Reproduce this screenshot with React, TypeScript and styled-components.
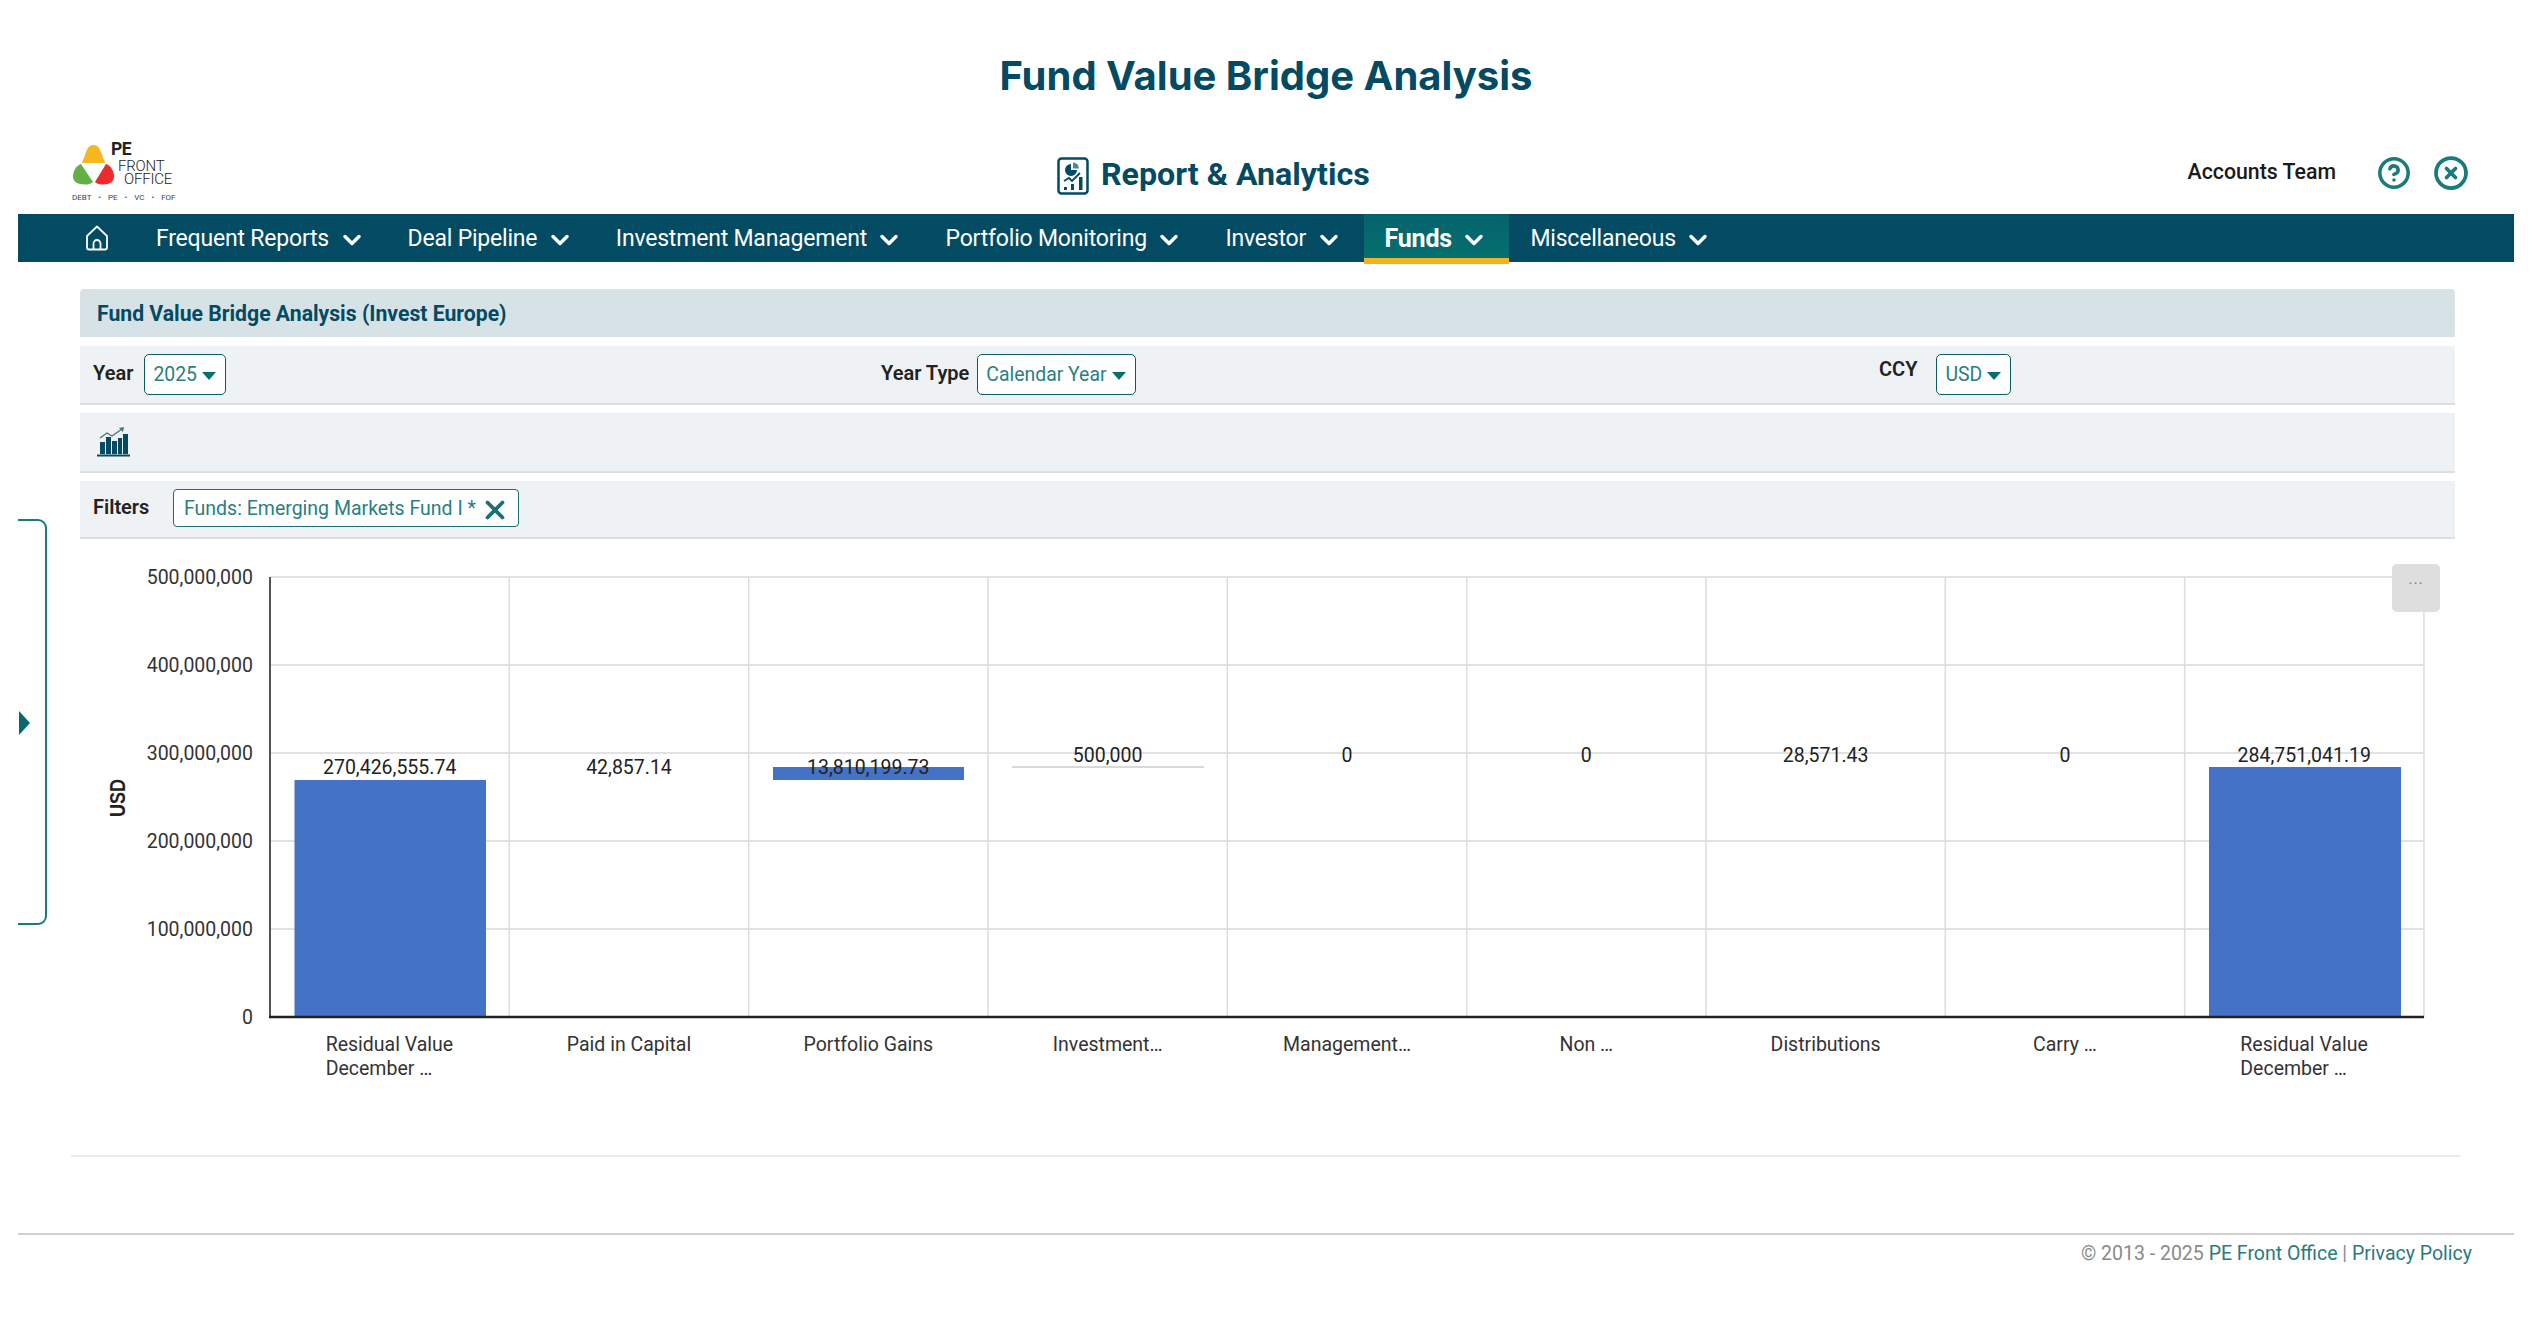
import styled, { createGlobalStyle } from "styled-components";
import { ChevronDown, CircleHelp, CircleX, X } from "lucide-react";

const GlobalStyle = createGlobalStyle`
  html, body {
    margin: 0;
    padding: 0;
    background: #fff;
    font-family: Roboto, "Liberation Sans", sans-serif;
  }
`;

const Page = styled.div`
  position: relative;
  width: 2530px;
  height: 1330px;
  overflow: hidden;
  padding: 0 16px 0 18px;
  box-sizing: border-box;
`;

const PageTitle = styled.h1`
  height: 140px;
  margin: 0;
  padding-top: 52px;
  box-sizing: border-box;
  text-align: center;
  font-family: Inter, Roboto, sans-serif;
  font-size: 40px;
  line-height: 48px;
  font-weight: 700;
  color: #034a63;
`;

const Header = styled.header`
  height: 74px;
  display: grid;
  grid-template-columns: 1039px auto 1fr;
  align-items: start;
`;

const LogoBox = styled.div`
  padding-left: 52px;
`;

const AppName = styled.div`
  display: flex;
  align-items: flex-start;
  gap: 12px;
  padding-top: 15px;
  font-size: 32.2px;
  line-height: 38px;
  font-weight: 700;
  color: #034a63;
`;

const ReportSvg = styled.svg`
  margin-top: 2px;
`;

const UserBox = styled.div`
  display: flex;
  justify-content: flex-end;
  align-items: center;
  padding: 15px 45px 0 0;
  color: #1a7a7c;
`;

const UserName = styled.span`
  margin: 0 41px 3px 0;
  font-size: 21.3px;
  font-weight: 500;
  color: #1a1a1a;
`;

const HelpIcon = styled(CircleHelp)`
  width: 34px;
  height: 34px;
`;

const CloseIcon = styled(CircleX)`
  width: 36px;
  height: 36px;
  margin-left: 22px;
`;

const Nav = styled.nav`
  height: 48px;
  display: flex;
  align-items: flex-start;
  background: #034a63;
  padding-left: 67px;
`;

const HomeLink = styled.div`
  height: 48px;
  display: flex;
  align-items: center;
  margin-right: 26px;
`;

const NavItem = styled.div<{ $active?: boolean }>`
  display: flex;
  align-items: center;
  gap: 8.5px;
  box-sizing: border-box;
  height: ${(p) => (p.$active ? "50px" : "48px")};
  padding: ${(p) => (p.$active ? "4px 21px 0" : "0 21px")};
  font-size: ${(p) => (p.$active ? "25px" : "23px")};
  letter-spacing: -0.2px;
  font-weight: ${(p) => (p.$active ? 700 : 400)};
  color: #fff;
  background: ${(p) => (p.$active ? "linear-gradient(#04626c, #06706f)" : "transparent")};
  border-bottom: ${(p) => (p.$active ? "6px solid #f5b120" : "none")};
  position: relative;
`;

const NavChevron = styled(ChevronDown)`
  width: 28px;
  height: 28px;
  margin-top: 3px;
`;

const Content = styled.main`
  padding: 27px 59px 0 62px;
`;

const PanelTitle = styled.div`
  height: 48px;
  display: flex;
  align-items: center;
  padding-left: 17px;
  margin-bottom: 9px;
  background: #d7e2e6;
  border-radius: 4px 4px 0 0;
  font-size: 21.2px;
  font-weight: 700;
  color: #034a63;
`;

const Row = styled.div<{ $height: number; $last?: boolean; $inset?: number }>`
  height: ${(p) => p.$height}px;
  display: flex;
  align-items: center;
  box-sizing: border-box;
  padding-left: ${(p) => p.$inset ?? 13}px;
  margin-bottom: ${(p) => (p.$last ? 0 : 8)}px;
  background: #eff2f5;
  border-bottom: 2px solid #dcdfe1;
`;

const FilterGroup = styled.div<{ $width?: number; $gap: number }>`
  display: flex;
  align-items: center;
  gap: ${(p) => p.$gap}px;
  width: ${(p) => (p.$width ? `${p.$width}px` : "auto")};
`;

const Label = styled.span<{ $raised?: boolean }>`
  font-size: 20px;
  font-weight: 600;
  color: #222;
  margin-bottom: ${(p) => (p.$raised ? 12 : 4)}px;
`;

const Dropdown = styled.div`
  height: 41px;
  display: flex;
  align-items: center;
  gap: 5px;
  box-sizing: border-box;
  padding: 0 9px 0 8px;
  background: #fff;
  border: 1.5px solid #0d5c63;
  border-radius: 5px;
  font-size: 19.4px;
  color: #2a8080;
`;

const Caret = styled.span`
  width: 0;
  height: 0;
  margin-top: 3px;
  border-left: 7.5px solid transparent;
  border-right: 7.5px solid transparent;
  border-top: 8px solid #06706f;
`;

const Chip = styled.div`
  height: 38px;
  display: flex;
  align-items: center;
  gap: 4px;
  box-sizing: border-box;
  padding: 0 8px 0 10px;
  margin-bottom: 2px;
  background: #fff;
  border: 1.5px solid #1a7072;
  border-radius: 4px;
  font-size: 19.5px;
  color: #2a8080;
`;

const ChipClose = styled(X)`
  width: 30px;
  height: 30px;
  margin-top: 3px;
  color: #1a7072;
`;

const ChartArea = styled.div`
  position: relative;
  height: 600px;
`;

const ChartSvg = styled.svg`
  display: block;
  font-family: Roboto, "Liberation Sans", sans-serif;
`;

const MoreButton = styled.div`
  position: absolute;
  top: 25px;
  right: 15px;
  width: 48px;
  height: 48px;
  display: flex;
  justify-content: center;
  background: #dedede;
  border-radius: 5px;
  font-size: 16px;
  line-height: 30px;
  letter-spacing: 1px;
  color: #5f8fc0;
`;

const Divider = styled.hr`
  height: 0;
  margin: 16px -5px 0 -9px;
  border: 0;
  border-top: 2px solid #ebebeb;
`;

const Footer = styled.footer`
  margin-top: 76px;
  border-top: 2px solid #cfcfcf;
  padding: 6px 42px 0 0;
  text-align: right;
  font-size: 19.5px;
  line-height: 26px;
  color: #8a8a8a;
`;

const FooterLink = styled.a`
  color: #2a7a80;
`;

const SideTab = styled.div`
  position: absolute;
  left: 18px;
  top: 519px;
  width: 29px;
  height: 406px;
  border: 2px solid #1a7a7c;
  border-left: 0;
  border-radius: 0 9px 9px 0;
  box-sizing: border-box;
`;

const SideArrow = styled.span`
  position: absolute;
  left: 1px;
  top: 190px;
  width: 0;
  height: 0;
  border-top: 12.5px solid transparent;
  border-bottom: 12.5px solid transparent;
  border-left: 11px solid #05686f;
`;

const navLinks = [
  "Frequent Reports",
  "Deal Pipeline",
  "Investment Management",
  "Portfolio Monitoring",
  "Investor",
  "Funds",
  "Miscellaneous",
];

const yTicks = [
  { label: "500,000,000", y: 577 },
  { label: "400,000,000", y: 665 },
  { label: "300,000,000", y: 753 },
  { label: "200,000,000", y: 841 },
  { label: "100,000,000", y: 929 },
  { label: "0", y: 1017 },
];

const COL = 239.33;
const LEFT = 270;

const columns = [
  { value: "270,426,555.74", valueY: 767, cat: ["Residual Value", "December …"] },
  { value: "42,857.14", valueY: 767, cat: ["Paid in Capital"] },
  { value: "13,810,199.73", valueY: 767, cat: ["Portfolio Gains"] },
  { value: "500,000", valueY: 755, cat: ["Investment…"] },
  { value: "0", valueY: 755, cat: ["Management…"] },
  { value: "0", valueY: 755, cat: ["Non …"] },
  { value: "28,571.43", valueY: 755, cat: ["Distributions"] },
  { value: "0", valueY: 755, cat: ["Carry …"] },
  { value: "284,751,041.19", valueY: 755, cat: ["Residual Value", "December …"] },
];

const bars = [
  { x: 294.5, y: 780, w: 191.5, h: 237 },
  { x: 773, y: 767, w: 191, h: 13 },
  { x: 2209, y: 767, w: 192, h: 250 },
];

function Logo() {
  return (
    <svg width="106" height="62" viewBox="70 140 106 62">
      <path d="M93.500 145c4 0 6 3 7.500 7l4 11H82l4-11c1.500-4 3.500-7 7.500-7z" fill="#f5b81f" />
      <path d="M81 164l12 18c-2 2-5 2.500-8 2.500-8 0-12-3-12-8 0-5 3-11 8-12.500z" fill="#63b146" />
      <path d="M106 164c5 1.500 8 7.500 8 12.500 0 5-4 8-11 8-3 0-6-.5-8-2.500z" fill="#ee2a2e" />
      <text x="111" y="155" fontFamily="Roboto, sans-serif" fontSize="17.500" fontWeight="700" fill="#222" letterSpacing="-0.5">
        PE
      </text>
      <text x="118" y="171" fontFamily="Roboto, sans-serif" fontSize="15" fontWeight="300" fill="#222" letterSpacing="-0.2">
        FRONT
      </text>
      <text x="124" y="184" fontFamily="Roboto, sans-serif" fontSize="15" fontWeight="300" fill="#222" letterSpacing="-0.2">
        OFFICE
      </text>
      <text x="72" y="200" fontFamily="Roboto, sans-serif" fontSize="8" fill="#444" wordSpacing="5">
        DEBT • PE • VC • FOF
      </text>
    </svg>
  );
}

function HomeIcon() {
  return (
    <svg width="24" height="26" viewBox="0 0 24 26" fill="none" stroke="#fff" strokeWidth="1.800" strokeLinejoin="round">
      <path d="M12 1.500L2 11v11.500a2 2 0 0 0 2 2h16a2 2 0 0 0 2-2V11z" />
      <path d="M8.500 24.500v-6a3.500 3.500 0 0 1 7 0v6" />
    </svg>
  );
}

function ReportIcon() {
  return (
    <ReportSvg width="32" height="38" viewBox="0 0 32 38" fill="none" stroke="#034a63">
      <rect x="1.500" y="1.500" width="29" height="35" rx="3" strokeWidth="2.500" />
      <path d="M14 7a6 6 0 1 0 6 6h-6z" fill="#034a63" stroke="none" />
      <path d="M16 5.500a6 6 0 0 1 6 6h-6z" fill="#4d8a99" stroke="none" />
      <path d="M7 24l5-3 3 3 8-8" strokeWidth="1.800" />
      <rect x="7" y="30" width="3" height="3" fill="#034a63" stroke="none" />
      <rect x="14" y="27" width="3" height="6" fill="#034a63" stroke="none" />
      <rect x="22" y="20" width="3.500" height="13" fill="#034a63" stroke="none" />
    </ReportSvg>
  );
}

function BarsIcon() {
  return (
    <svg width="33" height="30" viewBox="0 0 33 30" fill="#034a63">
      <path d="M3 11l7-5 5 3 10-7" fill="none" stroke="#4d7480" strokeWidth="1.400" />
      <path d="M22 1l5-1-1 5z" fill="#4d7480" />
      <rect x="3" y="15" width="5" height="12" />
      <rect x="9" y="10" width="5" height="17" />
      <rect x="15" y="14" width="5" height="13" />
      <rect x="21" y="11" width="4" height="16" />
      <rect x="26" y="7" width="5" height="20" />
      <rect x="0" y="27.500" width="33" height="2" />
    </svg>
  );
}

export default function App() {
  return (
    <>
      <GlobalStyle />
      <Page>
        <PageTitle>Fund Value Bridge Analysis</PageTitle>
        <Header>
          <LogoBox>
            <Logo />
          </LogoBox>
          <AppName>
            <ReportIcon />
            <span>Report &amp; Analytics</span>
          </AppName>
          <UserBox>
            <UserName>Accounts Team</UserName>
            <HelpIcon strokeWidth={2.5} />
            <CloseIcon strokeWidth={2.5} />
          </UserBox>
        </Header>
        <Nav>
          <HomeLink>
            <HomeIcon />
          </HomeLink>
          {navLinks.map((name) => (
            <NavItem key={name} $active={name === "Funds"}>
              {name}
              <NavChevron strokeWidth={3} />
            </NavItem>
          ))}
        </Nav>
        <Content>
          <PanelTitle>Fund Value Bridge Analysis (Invest Europe)</PanelTitle>
          <Row $height={59}>
            <FilterGroup $width={788} $gap={11}>
              <Label>Year</Label>
              <Dropdown>
                2025
                <Caret />
              </Dropdown>
            </FilterGroup>
            <FilterGroup $width={998} $gap={8}>
              <Label>Year Type</Label>
              <Dropdown>
                Calendar Year
                <Caret />
              </Dropdown>
            </FilterGroup>
            <FilterGroup $gap={19}>
              <Label $raised>CCY</Label>
              <Dropdown>
                USD
                <Caret />
              </Dropdown>
            </FilterGroup>
          </Row>
          <Row $height={60} $inset={17}>
            <BarsIcon />
          </Row>
          <Row $height={58} $last>
            <FilterGroup $width={80} $gap={0}>
              <Label>Filters</Label>
            </FilterGroup>
            <Chip>
              Funds: Emerging Markets Fund I *
              <ChipClose strokeWidth={3} />
            </Chip>
          </Row>
          <ChartArea>
            <ChartSvg width="2375" height="600" viewBox="80 539 2375 600">
              {yTicks.slice(0, 5).map((t) => (
                <line key={t.y} x1={LEFT} x2={2424} y1={t.y} y2={t.y} stroke="#e2e2e2" strokeWidth="2" />
              ))}
              {columns.map((_, i) => (
                <line
                  key={i}
                  x1={LEFT + COL * (i + 1)}
                  x2={LEFT + COL * (i + 1)}
                  y1={577}
                  y2={1017}
                  stroke="#dcdcdc"
                  strokeWidth="1.500"
                />
              ))}
              {bars.map((b) => (
                <rect key={b.x} x={b.x} y={b.y} width={b.w} height={b.h} fill="#4472c4" />
              ))}
              <line x1={1012} x2={1204} y1={767} y2={767} stroke="#d9d9d9" strokeWidth="2" />
              <line x1={LEFT} x2={LEFT} y1={577} y2={1017} stroke="#555" strokeWidth="2" />
              <line x1={LEFT - 1} x2={2424} y1={1017} y2={1017} stroke="#222" strokeWidth="2.500" />
              {yTicks.map((t) => (
                <text key={t.y} x={253} y={t.y + 7} textAnchor="end" fontSize="19.500" fill="#333">
                  {t.label}
                </text>
              ))}
              <text
                transform="translate(125 798) rotate(-90) scale(1 1.200)"
                textAnchor="middle"
                fontSize="18"
                fontWeight="700"
                fontFamily="Liberation Sans, sans-serif"
                fill="#222"
              >
                USD
              </text>
              {columns.map((c, i) => {
                const cx = LEFT + COL * (i + 0.5);
                return (
                  <g key={i}>
                    <text x={cx} y={c.valueY + 7} textAnchor="middle" fontSize="19.500" fill="#222">
                      {c.value}
                    </text>
                    {c.cat.length === 1 ? (
                      <text x={cx} y={1051} textAnchor="middle" fontSize="19.500" fill="#333">
                        {c.cat[0]}
                      </text>
                    ) : (
                      c.cat.map((line, n) => (
                        <text key={line} x={cx - 64} y={1051 + n * 24} fontSize="19.500" fill="#333">
                          {line}
                        </text>
                      ))
                    )}
                  </g>
                );
              })}
            </ChartSvg>
            <MoreButton>...</MoreButton>
          </ChartArea>
          <Divider />
        </Content>
        <Footer>
          © 2013 - 2025 <FooterLink>PE Front Office</FooterLink> | <FooterLink>Privacy Policy</FooterLink>
        </Footer>
        <SideTab>
          <SideArrow />
        </SideTab>
      </Page>
    </>
  );
}
